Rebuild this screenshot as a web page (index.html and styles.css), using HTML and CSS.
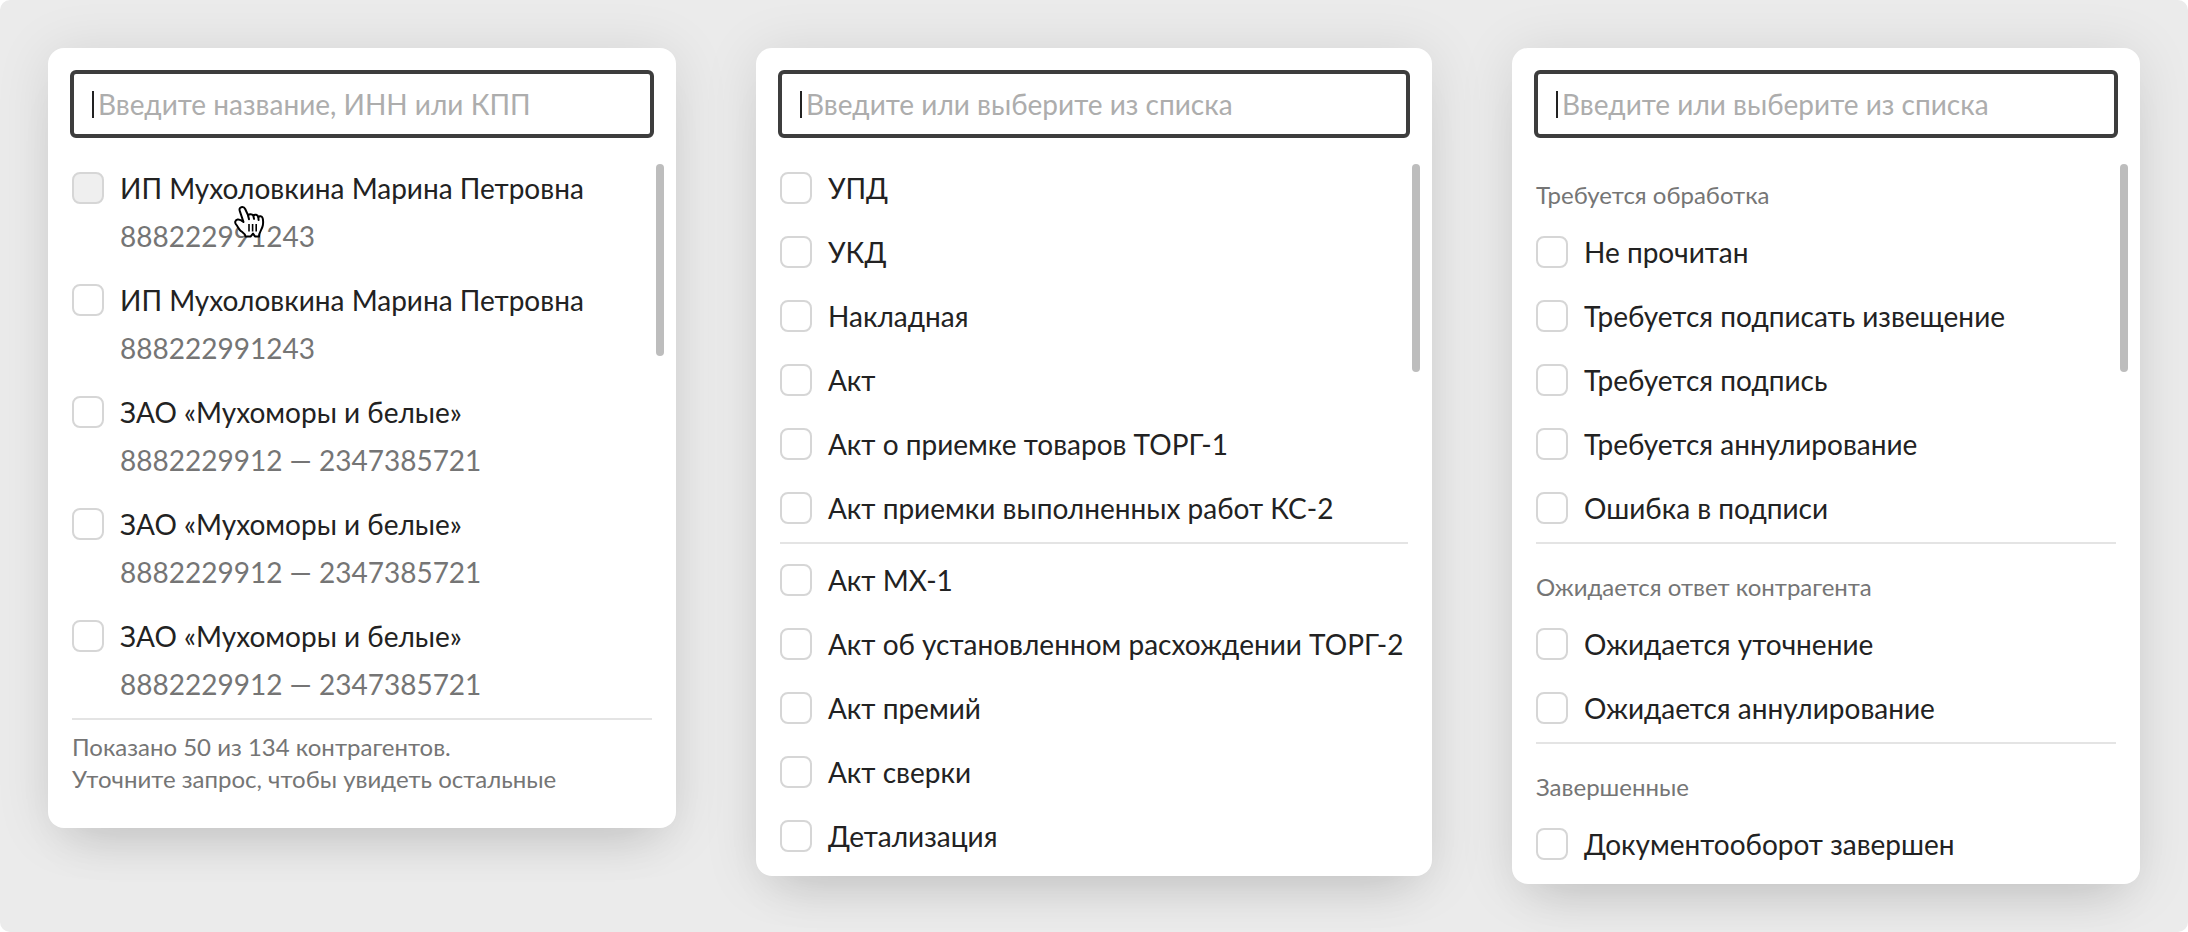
FILE: index.html
```
<!DOCTYPE html>
<html lang="ru">
<head>
    <meta charset="UTF-8">
    <meta name="viewport" content="width=device-width, initial-scale=1.0">
    <title>Фильтры</title>
    <link rel="stylesheet" href="styles.css">
</head>
<body>
    <main class="page">
        <section class="card">
            <div class="search">
                <input type="text" class="search-input" placeholder="Введите название, ИНН или КПП" aria-label="Введите название, ИНН или КПП">
                <span class="caret"></span>
            </div>
            <div class="list">
                <label class="item hovered">
                    <input type="checkbox" class="checkbox">
                    <span class="text">ИП Мухоловкина Марина Петровна<span class="inn">888222991243</span></span>
                    <svg class="cursor" width="32" height="34" viewBox="0 0 32 34">
                        <path d="M8.200 2.200C6.400 2.800 6.200 4.600 6.900 6.400L10.500 17C8.600 15.500 6.500 14.200 4.600 14.600C2 15.200 1.600 17.600 3 19.400C4.800 21.400 5.200 23.400 7 25.200C9 27.200 12.200 28.400 12.600 31.600H17.500L20 28.600L22 31.400L26 31.600C25.700 27.500 29 25 29.800 20.500C30.300 17.500 30.200 15 29.600 13C28.800 11 26.500 10.800 25.300 12C24.500 9.600 21.800 9 20.300 10.400C19 8.800 16.400 8.700 15 10.200L12.200 4C11.300 2.200 9.800 1.600 8.200 2.200Z" fill="#fff" stroke="#000" stroke-width="2" stroke-linejoin="round"/>
                        <path d="M15 10.200l1 4M20.300 10.400l.7 3.500M25.300 12l.3 3" fill="none" stroke="#000" stroke-width="2" stroke-linecap="round"/>
                        <path d="M16 19v7.500M19.600 19v7.500M23.200 19v7.500" fill="none" stroke="#000" stroke-width="1.600"/>
                    </svg>
                </label>
                <label class="item">
                    <input type="checkbox" class="checkbox">
                    <span class="text">ИП Мухоловкина Марина Петровна<span class="inn">888222991243</span></span>
                </label>
                <label class="item">
                    <input type="checkbox" class="checkbox">
                    <span class="text">ЗАО «Мухоморы и белые»<span class="inn">8882229912 — 2347385721</span></span>
                </label>
                <label class="item">
                    <input type="checkbox" class="checkbox">
                    <span class="text">ЗАО «Мухоморы и белые»<span class="inn">8882229912 — 2347385721</span></span>
                </label>
                <label class="item">
                    <input type="checkbox" class="checkbox">
                    <span class="text">ЗАО «Мухоморы и белые»<span class="inn">8882229912 — 2347385721</span></span>
                </label>
                <hr class="divider">
                <p class="hint">Показано 50 из 134 контрагентов.<br>Уточните запрос, чтобы увидеть остальные</p>
            </div>
            <div class="scrollbar scrollbar-short"></div>
        </section>

        <section class="card">
            <div class="search">
                <input type="text" class="search-input" placeholder="Введите или выберите из списка" aria-label="Тип документа">
                <span class="caret"></span>
            </div>
            <div class="list">
                <label class="item"><input type="checkbox" class="checkbox"><span class="text">УПД</span></label>
                <label class="item"><input type="checkbox" class="checkbox"><span class="text">УКД</span></label>
                <label class="item"><input type="checkbox" class="checkbox"><span class="text">Накладная</span></label>
                <label class="item"><input type="checkbox" class="checkbox"><span class="text">Акт</span></label>
                <label class="item"><input type="checkbox" class="checkbox"><span class="text">Акт о приемке товаров ТОРГ-1</span></label>
                <label class="item"><input type="checkbox" class="checkbox"><span class="text">Акт приемки выполненных работ КС-2</span></label>
                <hr class="divider">
                <label class="item"><input type="checkbox" class="checkbox"><span class="text">Акт МХ-1</span></label>
                <label class="item"><input type="checkbox" class="checkbox"><span class="text">Акт об установленном расхождении ТОРГ-2</span></label>
                <label class="item"><input type="checkbox" class="checkbox"><span class="text">Акт премий</span></label>
                <label class="item"><input type="checkbox" class="checkbox"><span class="text">Акт сверки</span></label>
                <label class="item"><input type="checkbox" class="checkbox"><span class="text">Детализация</span></label>
            </div>
            <div class="scrollbar"></div>
        </section>

        <section class="card">
            <div class="search">
                <input type="text" class="search-input" placeholder="Введите или выберите из списка" aria-label="Статус документа">
                <span class="caret"></span>
            </div>
            <div class="list">
                <h2 class="group">Требуется обработка</h2>
                <label class="item"><input type="checkbox" class="checkbox"><span class="text">Не прочитан</span></label>
                <label class="item"><input type="checkbox" class="checkbox"><span class="text">Требуется подписать извещение</span></label>
                <label class="item"><input type="checkbox" class="checkbox"><span class="text">Требуется подпись</span></label>
                <label class="item"><input type="checkbox" class="checkbox"><span class="text">Требуется аннулирование</span></label>
                <label class="item"><input type="checkbox" class="checkbox"><span class="text">Ошибка в подписи</span></label>
                <hr class="divider">
                <h2 class="group">Ожидается ответ контрагента</h2>
                <label class="item"><input type="checkbox" class="checkbox"><span class="text">Ожидается уточнение</span></label>
                <label class="item"><input type="checkbox" class="checkbox"><span class="text">Ожидается аннулирование</span></label>
                <hr class="divider">
                <h2 class="group">Завершенные</h2>
                <label class="item"><input type="checkbox" class="checkbox"><span class="text">Документооборот завершен</span></label>
            </div>
            <div class="scrollbar"></div>
        </section>
    </main>
</body>
</html>
```
FILE: styles.css
```
* {
    box-sizing: border-box;
}
body {
    margin: 0;
    background-color: #fff;
    font-family: Lato, sans-serif;
    font-size: 28px;
    line-height: 32px;
    color: #222;
}
.page {
    display: grid;
    grid-template-columns: 157fr 169fr 157fr;
    align-items: start;
    gap: 80px;
    min-height: 100vh;
    padding: 48px;
    background-color: #ebebeb;
    border-radius: 10px;
}
.card {
    position: relative;
    padding: 22px 24px 8px;
    background-color: #fff;
    border-radius: 16px;
    box-shadow: 0 32px 48px -24px rgba(0, 0, 0, 0.12), 0 4px 56px rgba(0, 0, 0, 0.1);
}
.search {
    position: relative;
    margin: 0 -2px 18px;
}
.search-input {
    display: block;
    width: 100%;
    height: 68px;
    padding: 0 24px;
    border: 4px solid #3d3d3d;
    border-radius: 6px;
    outline: none;
    background-color: #fff;
    font: inherit;
    color: #222;
}
.search-input::placeholder {
    color: #adadad;
    opacity: 1;
}
.caret {
    position: absolute;
    top: 21px;
    left: 22px;
    width: 2px;
    height: 27px;
    background-color: #222;
}
.item {
    position: relative;
    display: flex;
    align-items: flex-start;
    gap: 16px;
    padding: 16px 0;
    cursor: pointer;
}
.checkbox {
    appearance: none;
    flex: none;
    width: 32px;
    height: 32px;
    margin: 0;
    border: 2px solid #d6d6d6;
    border-radius: 8px;
    background-color: #fff;
}
.hovered .checkbox {
    background-color: #efefef;
}
.inn {
    display: block;
    margin-top: 16px;
    color: #757575;
}
.cursor {
    position: absolute;
    top: 49px;
    left: 161px;
}
.divider {
    height: 2px;
    margin: 2px 0 4px;
    border: none;
    background-color: #e4e4e4;
}
.hint {
    margin: 0;
    padding: 7px 0 25px;
    font-size: 24px;
    color: #757575;
}
.group {
    margin: 0;
    padding: 23px 0 9px;
    font-size: 24px;
    font-weight: 400;
    color: #757575;
}
.scrollbar {
    position: absolute;
    top: 116px;
    right: 12px;
    width: 8px;
    height: 208px;
    border-radius: 4px;
    background-color: #bdbdbd;
}
.scrollbar-short {
    height: 192px;
}
```
